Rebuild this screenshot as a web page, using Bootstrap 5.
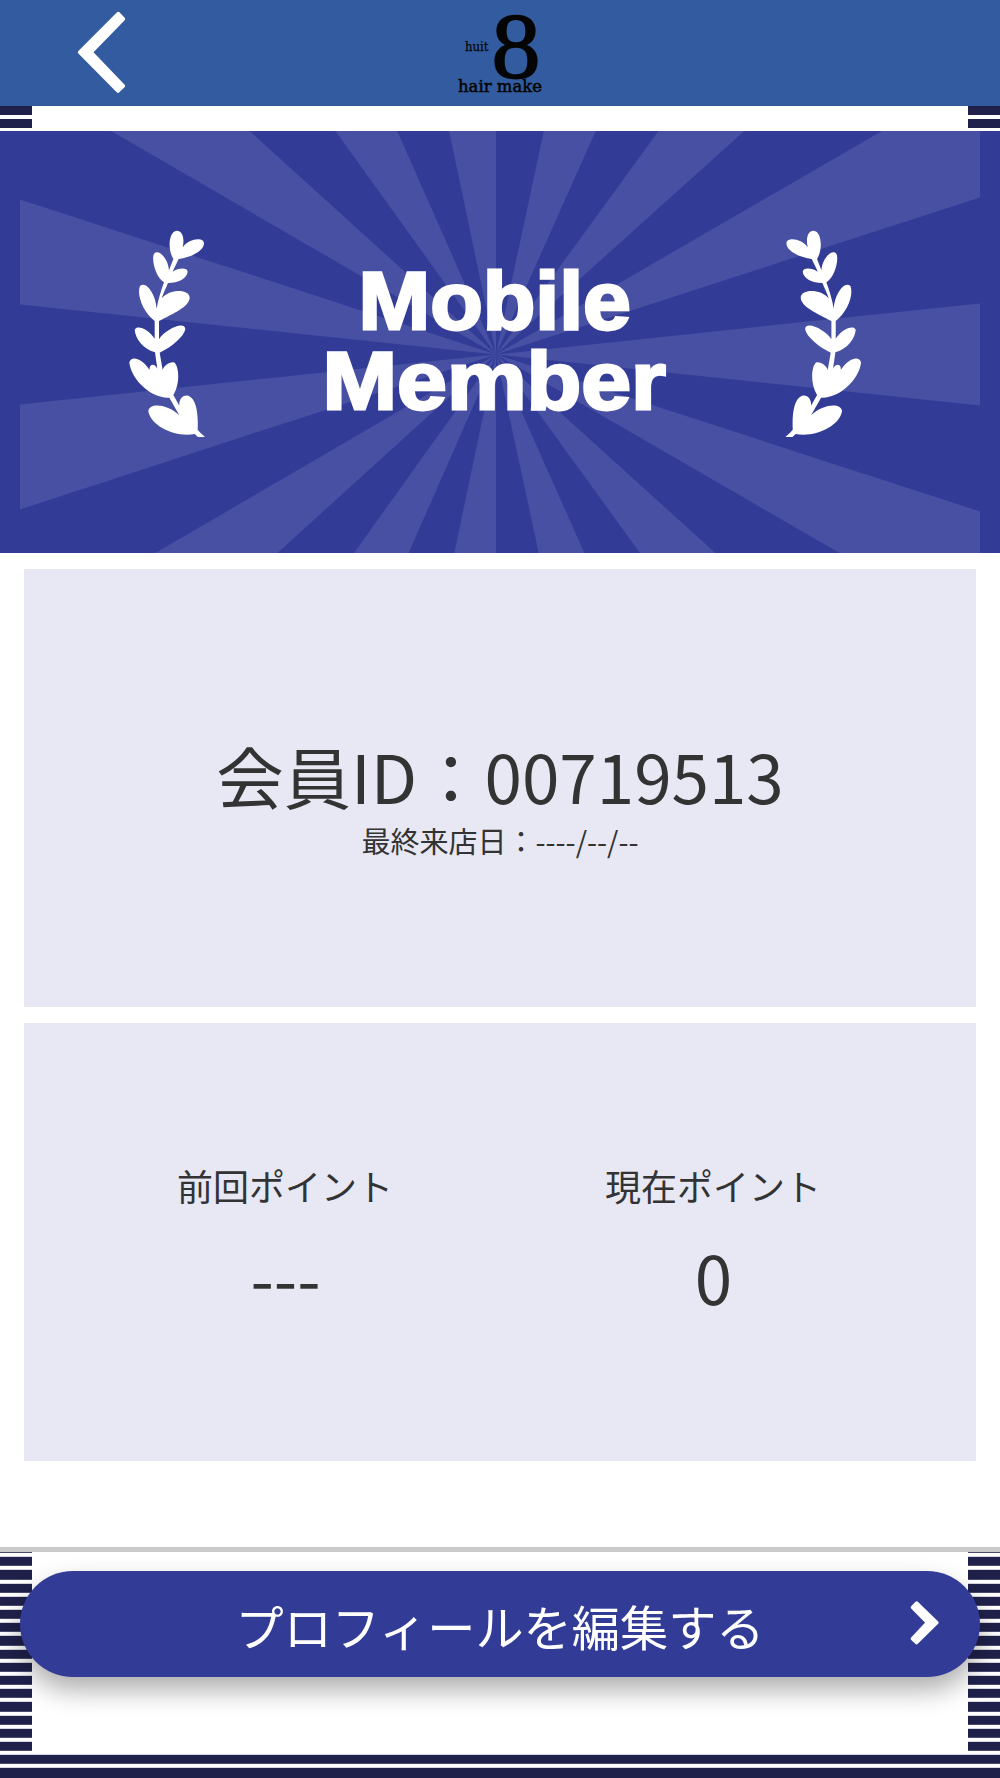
<!DOCTYPE html>
<html lang="ja">
<head>
<meta charset="utf-8">
<meta name="viewport" content="width=device-width, initial-scale=1">
<title>huit 8 hair make</title>
<link href="https://cdn.jsdelivr.net/npm/bootstrap@5.3.0/dist/css/bootstrap.min.css" rel="stylesheet">
<style>
body{font-family:"Noto Sans CJK JP","Liberation Sans",sans-serif;color:#333;height:1778px;overflow:hidden;background:#fff}
.topbar{height:106.4px;background:#325c9f}
.topbar svg{height:106px}
.striped{background-image:repeating-linear-gradient(#20214b 0 9.2px,#fff 9.2px 13.2px)}
.strip-top{height:24.2px;background-position:0 -.6px}
.strip-top>div,.side-clear{margin:0 32px;background:#fff}
.hero{height:422.4px;background:#323c97}
.sheet{height:999px;border-bottom:5px solid #c9c9c9;padding:16px 24px 0}
.panel{height:437.7px;background:#e8e8f5;margin-bottom:16.3px}
.id-panel{padding-top:20px}
.big-text{font-size:67.4px;line-height:1}
.sub-text{font-size:29px;line-height:1;margin-top:17px}
.pt-panel{padding:0 49px 0 47px}
.pt-label{font-size:36px;line-height:1;margin-bottom:38.5px}
.pt-panel>div{padding-bottom:7px}
.pt-panel .big-text{padding-left:1px}
.foot{height:226px;background-image:repeating-linear-gradient(#20214b 0 9.2px,#fff 9.2px 13.2px);background-position:0 -8.2px}
.side-clear{height:200px;padding-top:19px}
.edit-btn{height:106px;margin:0 -12px;padding-top:2px;background:#323c97;color:#fff;font-size:48.2px;line-height:1;box-shadow:0 13px 26px rgba(0,0,0,.32);text-decoration:none}
.edit-btn:hover{color:#fff}
</style>
</head>
<body>
<header class="topbar">
<svg class="d-block w-100" viewBox="0 0 1000 106" aria-label="huit 8 hair make">
<polygon transform="scale(.33333)" points="355,41 370,57 273,157 370,258 354,273 239,157" fill="#fff" stroke="#fff" stroke-width="11" stroke-linejoin="round"/>
<g fill="#050505" stroke="#050505" font-family="DejaVu Serif, serif">
<text x="465" y="51.3" font-size="12" textLength="23.5" lengthAdjust="spacingAndGlyphs" stroke-width=".25">huit</text>
<text x="491.5" y="76.8" font-size="93" font-family="Liberation Serif" textLength="49" lengthAdjust="spacingAndGlyphs" stroke-width="1.6">8</text>
<text x="458" y="91.6" font-size="16" textLength="84" lengthAdjust="spacingAndGlyphs" stroke-width=".5">hair make</text>
</g>
</svg>
</header>
<div class="striped strip-top"><div class="h-100"></div></div>
<section class="hero">
<svg class="d-block w-100 h-100" viewBox="0 130.6 1000 422.4" preserveAspectRatio="none">
<g fill="#4750a2">
<path d="M496 354L110 130H249ZM496 354L335 130H397ZM496 354L449 130H496ZM496 354L544 130H596ZM496 354L659 130H745ZM496 354L883 130H980V197ZM496 354L980 303V405ZM496 354L980 511V554H842ZM496 354L717 554H641ZM496 354L585 554H539ZM496 354V554H454ZM496 354L408 554H353ZM496 354L276 554H153ZM496 354L20 509V404ZM496 354L20 304V199Z"/>
</g>
<defs>
<g id="laurel" transform="translate(110 209.6) scale(.33333)" fill="#fff">
<path d="M190 147C172 118 176 64 200 62C219 62 224 88 218 112C236 85 281 80 282 100C282 122 245 142 206 147C200 161 193 172 188 185C205 173 232 171 233 185C231 205 205 219 174 219C167 236 159 252 155 265C177 237 238 235 239 263C238 290 189 311 147 333L147 388C163 360 224 330 226 357C222 380 185 411 149 428L158 480C161 468 180 453 194 458C207 471 211 521 190 555L208 587C206 564 222 553 235 557C261 567 265 615 263 659L271 668L285 681H264L254 672C199 683 124 651 115 604C117 577 173 582 208 616L178 563C126 567 63 510 58 457C63 438 92 440 119 480C116 462 134 457 142 476L135 427C98 416 76 385 74 359C83 344 115 358 134 386L134 333C100 308 79 254 90 228C107 211 137 250 140 296C144 271 153 243 162 217C139 205 123 151 132 131C148 115 175 149 177 181Z"/>
</g>
</defs>
<use href="#laurel"/>
<use href="#laurel" transform="translate(990.4 0) scale(-1 1)"/>
<g fill="#fff" stroke="#fff" stroke-width="2.8" font-family="Liberation Sans, sans-serif" font-weight="bold" font-size="82">
<text x="358.5" y="329" textLength="272.5" lengthAdjust="spacingAndGlyphs">Mobile</text>
<text x="322.5" y="408.4" textLength="343.5" lengthAdjust="spacingAndGlyphs">Member</text>
</g>
</svg>
</section>
<main class="sheet bg-white">
<section class="panel id-panel d-flex flex-column align-items-center justify-content-center">
<div class="big-text">会員ID：00719513</div>
<div class="sub-text">最終来店日：----/--/--</div>
</section>
<section class="panel pt-panel row g-0 align-content-center text-center">
<div class="col-6"><div class="pt-label">前回ポイント</div><div class="big-text">---</div></div>
<div class="col-6"><div class="pt-label">現在ポイント</div><div class="big-text">0</div></div>
</section>
</main>
<footer class="foot">
<div class="side-clear">
<a href="#" class="edit-btn rounded-pill d-flex align-items-center justify-content-center position-relative">
<span>プロフィールを編集する</span>
<svg class="position-absolute top-0 end-0" width="120" height="106" viewBox="0 123 360 318"><polygon points="170,219 157,232 202,278 157,326 170,338 231,278" fill="#fff" stroke="#fff" stroke-width="10" stroke-linejoin="round"/></svg>
</a>
</div>
</footer>
<script src="https://cdn.jsdelivr.net/npm/bootstrap@5.3.0/dist/js/bootstrap.bundle.min.js"></script>
</body>
</html>
